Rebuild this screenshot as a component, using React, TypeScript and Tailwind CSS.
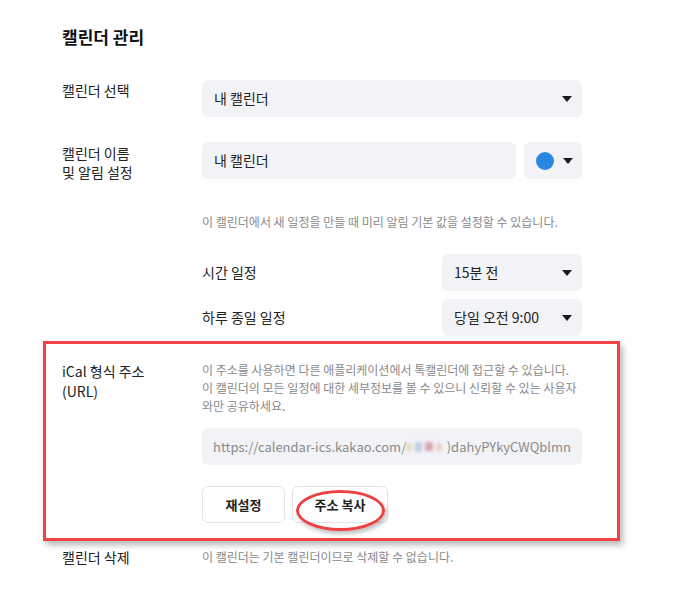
import React from "react";

const font = { fontFamily: '"Noto Sans CJK KR", "Noto Sans", sans-serif' };

function Caret() {
  return (
    <svg width="10" height="6" viewBox="0 0 10 6" className="shrink-0" aria-hidden="true">
      <path d="M0 0h10L5 6z" fill="#1a1a1a" />
    </svg>
  );
}

function SelectBox({ value, className }: { value: string; className: string }) {
  return (
    <div className={`flex h-[37px] items-center justify-between rounded-[6px] bg-[#f2f3f7] pl-[12px] pr-[10px] text-[14px] text-[#222] ${className}`}>
      <span>{value}</span>
      <Caret />
    </div>
  );
}

export default function App() {
  return (
    <div className="relative h-[596px] w-[678px] overflow-hidden bg-white" style={font}>
      <div className="px-[62px] pt-[26px]">
        <h1 className="text-[17px] font-bold leading-[22px] text-[#111]">캘린더 관리</h1>

        {/* 캘린더 선택 */}
        <div className="mt-[32px] grid grid-cols-[140px_380px]">
          <div className="text-[14px] leading-[20px] text-[#222]">캘린더 선택</div>
          <SelectBox value="내 캘린더" className="w-[380px]" />
        </div>

        {/* 이름 및 알림 */}
        <div className="mt-[25px] grid grid-cols-[140px_380px]">
          <div className="pt-[2px] text-[14px] leading-[19px] text-[#222]">
            캘린더 이름
            <br />
            및 알림 설정
          </div>
          <div>
            <div className="flex gap-[8px]">
              <div className="flex h-[37px] w-[314px] items-center rounded-[6px] bg-[#f2f3f7] px-[12px] text-[14px] text-[#222]">
                내 캘린더
              </div>
              <div className="flex h-[37px] w-[58px] items-center justify-between rounded-[6px] bg-[#f2f3f7] pl-[12px] pr-[9px]">
                <span className="h-[18px] w-[18px] rounded-full bg-[#2a86e2]" />
                <Caret />
              </div>
            </div>
            <p className="mt-[34px] text-[12px] leading-[18px] text-[#8a8a8a]">
              이 캘린더에서 새 일정을 만들 때 미리 알림 기본 값을 설정할 수 있습니다.
            </p>
            <div className="mt-[23px] flex flex-col gap-[8px]">
              <div className="flex items-center justify-between">
                <span className="text-[14px] text-[#222]">시간 일정</span>
                <SelectBox value="15분 전" className="w-[140px]" />
              </div>
              <div className="flex items-center justify-between">
                <span className="text-[14px] text-[#222]">하루 종일 일정</span>
                <SelectBox value="당일 오전 9:00" className="w-[140px]" />
              </div>
            </div>
          </div>
        </div>

        {/* iCal */}
        <div className="mt-[25px] grid grid-cols-[140px_380px]">
          <div className="text-[14px] leading-[20px] text-[#222]">
            iCal 형식 주소
            <br />
            (URL)
          </div>
          <div>
            <p className="whitespace-nowrap text-[12px] leading-[18px] text-[#8a8a8a]">
              이 주소를 사용하면 다른 애플리케이션에서 톡캘린더에 접근할 수 있습니다.
              <br />
              이 캘린더의 모든 일정에 대한 세부정보를 볼 수 있으니 신뢰할 수 있는 사용자
              <br />
              와만 공유하세요.
            </p>
            <div className="mt-[13px] flex h-[37px] items-center overflow-hidden whitespace-nowrap rounded-[6px] bg-[#f2f3f7] px-[11px] text-[13px] text-[#8a8a8a]">
              <span>https://calendar-ics.kakao.com/</span>
              <span className="flex w-[46px] items-center gap-[3px] blur-[1.5px]">
                <span className="h-[8px] w-[6px] bg-[#e6dcc2]" />
                <span className="h-[10px] w-[7px] bg-[#c9cfe6]" />
                <span className="h-[9px] w-[8px] bg-[#d9a9b2]" />
                <span className="h-[8px] w-[6px] bg-[#e9d5d0]" />
              </span>
              <span>)dahyPYkyCWQblmn</span>
            </div>
            <div className="mt-[21px] flex gap-[7px]">
              <button className="h-[37px] w-[83px] rounded-[6px] border border-[#e4e4e4] bg-white text-[13px] font-bold text-[#222]">
                재설정
              </button>
              <button className="h-[37px] w-[96px] rounded-[6px] border border-[#e4e4e4] bg-white text-[13px] font-bold text-[#222]">
                주소 복사
              </button>
            </div>
          </div>
        </div>

        {/* 삭제 */}
        <div className="mt-[24px] grid grid-cols-[140px_380px] items-center">
          <div className="text-[14px] leading-[20px] text-[#222]">캘린더 삭제</div>
          <p className="text-[12px] leading-[18px] text-[#8a8a8a]">이 캘린더는 기본 캘린더이므로 삭제할 수 없습니다.</p>
        </div>
      </div>

      {/* annotation overlays */}
      <div className="pointer-events-none absolute left-[43px] top-[341px] h-[200px] w-[577px] border-[3px] border-[#f04444] shadow-[3px_4px_6px_rgba(0,0,0,0.28)]" />
      <div className="pointer-events-none absolute left-[296px] top-[490px] h-[41px] w-[89px] rounded-[50%] border-[3px] border-[#ee4040] shadow-[2px_3px_4px_rgba(0,0,0,0.25)]" />
    </div>
  );
}
